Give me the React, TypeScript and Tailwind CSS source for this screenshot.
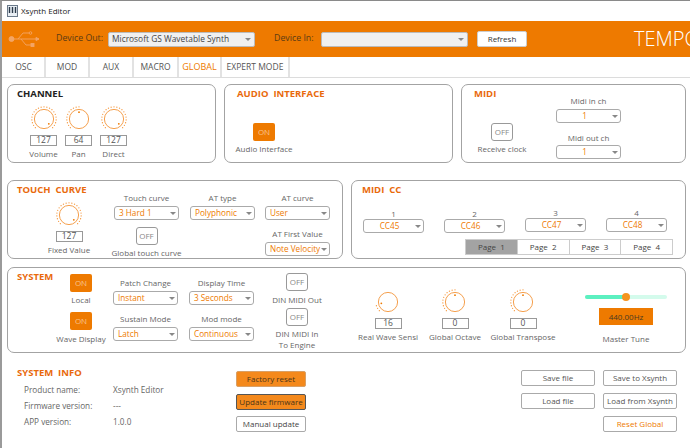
import React from "react";

const font = { fontFamily: '"Open Sans", "Noto Sans", sans-serif' };

const Knob = ({ pct }: { pct: number }) => {
  const c = 13;
  const start = 135;
  const sweep = 270;
  const angle = start + pct * sweep;
  const rad = (a: number) => (a * Math.PI) / 180;
  const dots = [];
  for (let i = 0; i <= 20; i++) {
    const a = start + (i / 20) * sweep;
    if (a > angle + 0.5) break;
    dots.push(
      <circle key={i} cx={c + 12.2 * Math.cos(rad(a))} cy={c + 12.2 * Math.sin(rad(a))} r="0.65" fill="#f5963a" />
    );
  }
  return (
    <svg width="26" height="26" viewBox="0 0 26 26" className="block shrink-0">
      {dots}
      <circle cx={c} cy={c} r="9.6" fill="none" stroke="#f5a04e" strokeWidth="1" />
      <circle cx={c + 6.8 * Math.cos(rad(angle))} cy={c + 6.8 * Math.sin(rad(angle))} r="0.9" fill="#ee7a00" />
    </svg>
  );
};

const ValueBox = ({ children }: { children: React.ReactNode }) => (
  <div className="w-[27px] h-[11px] border border-[#999] flex items-center justify-center text-[8.5px] leading-none text-[#555]">
    {children}
  </div>
);

const Label = ({ children, className = "" }: { children: React.ReactNode; className?: string }) => (
  <div className={"text-[8px] leading-[11px] text-[#666] whitespace-nowrap text-center " + className}>{children}</div>
);

const KnobCell = ({ value, pct, label, w }: { value: number; pct: number; label: string; w: string }) => (
  <div className={"flex flex-col items-center " + w}>
    <Knob pct={pct} />
    <div className="mt-[3px]">
      <ValueBox>{value}</ValueBox>
    </div>
    <Label className="mt-[2px]">{label}</Label>
  </div>
);

const Select = ({ value, center, w = "w-[65px]" }: { value: string; center?: boolean; w?: string }) => (
  <div className={"relative h-[14px] rounded-[3px] border border-[#aaa] bg-white text-[8.2px] leading-none text-[#ee7a00] flex items-center shrink-0 " + w + (center ? " justify-center pr-[8px]" : " pl-[4px]")}>
    <span className="whitespace-nowrap">{value}</span>
    <span className="absolute right-[2px] top-[5px] w-0 h-0 border-l-[3px] border-r-[3px] border-t-[3px] border-l-transparent border-r-transparent border-t-[#888]" />
  </div>
);

const Toggle = ({ on }: { on?: boolean }) =>
  on ? (
    <div className="w-[22px] h-[18px] rounded-[2px] bg-[#ee7a00] text-[#f9c48c] text-[8px] flex items-center justify-center">ON</div>
  ) : (
    <div className="w-[22px] h-[18px] rounded-[3px] border border-[#999] bg-white text-[#888] text-[8px] flex items-center justify-center">OFF</div>
  );

const Title = ({ children, black }: { children: React.ReactNode; black?: boolean }) => (
  <div className={"text-[9.5px] font-bold leading-[12px] whitespace-pre " + (black ? "text-[#222]" : "text-[#e96a0c]")}>{children}</div>
);

const Panel = ({ className, children }: { className: string; children: React.ReactNode }) => (
  <div className={"border border-[#a3a3a3] rounded-[7px] bg-white " + className}>{children}</div>
);

const Btn = ({ children, className = "", w }: { children: React.ReactNode; className?: string; w: string }) => (
  <div className={"h-[16px] rounded-[2px] border flex items-center justify-center text-[8px] whitespace-nowrap " + w + " " + className}>
    {children}
  </div>
);

const UsbIcon = () => (
  <svg width="33" height="16" viewBox="0 0 33 16" fill="none" stroke="#f3a566" strokeWidth="0.9" className="shrink-0">
    <circle cx="3.5" cy="8" r="2.5" fill="#f3a566" />
    <path d="M5 8H31" />
    <path d="M31 8l-3-1.6v3.2z" fill="#f3a566" />
    <path d="M10 8l5-6h6" />
    <circle cx="22.5" cy="2" r="1.3" />
    <path d="M13 8l5 6h5" />
    <rect x="23" y="12.5" width="3" height="3" fill="#f3a566" />
  </svg>
);

const AppIcon = () => (
  <svg width="11" height="12" viewBox="0 0 11 12" className="shrink-0">
    <rect x="0.5" y="0.5" width="10" height="11" fill="#e8eef4" stroke="#6b7a8a" />
    <path d="M2.5 2v6M5.5 2v6M8.5 2v6" stroke="#2b3a4a" strokeWidth="1.4" />
  </svg>
);

const tabs = [
  { name: "OSC", w: "w-[43px]" },
  { name: "MOD", w: "w-[44px]" },
  { name: "AUX", w: "w-[44px]" },
  { name: "MACRO", w: "w-[45px]" },
  { name: "GLOBAL", w: "w-[43px]", active: true },
  { name: "EXPERT MODE", w: "w-[68px]" },
];

const LabeledSelect = ({ label, value, w }: { label: string; value: string; w?: string }) => (
  <div className="flex flex-col items-center">
    <Label className="h-[14px]">{label}</Label>
    <Select value={value} w={w} />
  </div>
);

export default function App() {
  return (
    <div className="w-[690px] h-[448px] overflow-hidden bg-white border-t border-l-2 border-t-[#8a8a8a] border-l-[#9a9a9a] flex flex-col" style={font}>
      {/* title bar */}
      <div className="h-[20px] flex items-center gap-[3px] pl-[5px] text-[8px] text-[#222]">
        <AppIcon />
        <span>Xsynth Editor</span>
      </div>

      {/* device bar */}
      <div className="h-[36px] bg-[#ee7a00] flex items-center pl-[6px] overflow-hidden text-[8.8px] text-[#5b3a14]">
        <UsbIcon />
        <span className="ml-[15px] w-[49px] shrink-0 whitespace-nowrap">Device Out:</span>
        <div className="ml-[3px] w-[147px] h-[15px] shrink-0 bg-[#f0f0f0] border border-[#bbb] rounded-[2px] relative flex items-center pl-[3px] text-[8.4px] text-[#444] whitespace-nowrap">
          Microsoft GS Wavetable Synth
          <span className="absolute right-[3px] top-[5px] w-0 h-0 border-l-[3px] border-r-[3px] border-t-[3px] border-l-transparent border-r-transparent border-t-[#888]" />
        </div>
        <span className="ml-[19px] w-[42px] shrink-0 whitespace-nowrap">Device In:</span>
        <div className="ml-[5px] w-[147px] h-[15px] shrink-0 bg-[#f0f0f0] border border-[#bbb] rounded-[2px] relative">
          <span className="absolute right-[3px] top-[5px] w-0 h-0 border-l-[3px] border-r-[3px] border-t-[3px] border-l-transparent border-r-transparent border-t-[#888]" />
        </div>
        <div className="ml-[9px] w-[50px] h-[16px] shrink-0 bg-white border border-[#ccc] rounded-[2px] flex items-center justify-center text-[8px] text-[#333]">Refresh</div>
        <span className="ml-[107px] shrink-0 text-[20px] font-light text-white leading-none whitespace-nowrap">TEMPO</span>
      </div>

      {/* tabs */}
      <div className="h-[21px] flex pl-[1px] border-b border-[#dcdcdc] text-[8.5px] text-[#555] shrink-0">
        {tabs.map((t) => (
          <div
            key={t.name}
            className={"flex items-center justify-center border-r-2 border-[#e2e2e2] whitespace-nowrap " + t.w + (t.active ? " text-[#ee7a00] text-[9px]" : "")}
          >
            {t.name}
          </div>
        ))}
      </div>

      <div className="pl-[5px] flex flex-col">
        {/* row 1 */}
        <div className="flex gap-[8px] mt-[6px]">
          <Panel className="w-[209px] h-[79px] pl-[9px] pt-[3px]">
            <Title black>CHANNEL</Title>
            <div className="flex ml-[9px] mt-[6px]">
              <KnobCell value={127} pct={1} label="Volume" w="w-[35px]" />
              <KnobCell value={64} pct={0.5} label="Pan" w="w-[35px]" />
              <KnobCell value={127} pct={1} label="Direct" w="w-[35px]" />
            </div>
          </Panel>
          <Panel className="w-[229px] h-[79px] pl-[12px] pt-[3px]">
            <Title>{"AUDIO  INTERFACE"}</Title>
            <div className="w-[54px] flex flex-col items-center mt-[23px]">
              <Toggle on />
              <Label className="mt-[2px]">Audio Interface</Label>
            </div>
          </Panel>
          <Panel className="w-[225px] h-[79px] pl-[12px] pt-[3px] flex">
            <div className="w-[56px]">
              <Title>MIDI</Title>
              <div className="flex flex-col items-center mt-[23px]">
                <Toggle />
                <Label className="mt-[2px]">Receive clock</Label>
              </div>
            </div>
            <div className="ml-[26px] flex flex-col items-center pt-[7px]">
              <Label className="h-[14px]">Midi in ch</Label>
              <Select value="1" center />
              <Label className="h-[14px] mt-[8px] leading-[14px]">Midi out ch</Label>
              <Select value="1" center />
            </div>
          </Panel>
        </div>

        {/* row 2 */}
        <div className="flex gap-[8px] mt-[17px]">
          <Panel className="w-[336px] h-[79px] pl-[9px] pt-[3px] flex">
            <div className="w-[96px] shrink-0">
              <Title>{"TOUCH  CURVE"}</Title>
              <div className="w-[104px] flex flex-col items-center mt-[6px]">
                <KnobCell value={127} pct={1} label="Fixed Value" w="w-[60px]" />
              </div>
            </div>
            <div className="flex flex-col items-center pt-[8px] w-[65px] ml-[1px]">
              <LabeledSelect label="Touch curve" value="3 Hard 1" />
              <div className="mt-[7px]">
                <Toggle />
              </div>
              <Label className="mt-[2px]">Global touch curve</Label>
            </div>
            <div className="pt-[8px] ml-[11px]">
              <LabeledSelect label="AT  type" value="Polyphonic" />
            </div>
            <div className="pt-[8px] ml-[10px] flex flex-col items-center">
              <LabeledSelect label="AT curve" value="User" />
              <div className="mt-[8px]">
                <LabeledSelect label="AT First Value" value="Note Velocity" />
              </div>
            </div>
          </Panel>
          <Panel className="w-[335px] h-[79px] pl-[10px] pt-[3px]">
            <Title>{"MIDI  CC"}</Title>
            <div className="flex gap-[20px] ml-[1px] mt-[12px] items-end">
              {["CC45", "CC46", "CC47", "CC48"].map((cc, i) => (
                <div key={cc} className={"flex flex-col items-center " + (i > 1 ? "-translate-y-px" : "")}>
                  <Label className="h-[11px]">{i + 1}</Label>
                  <Select value={cc} center w="w-[61px]" />
                </div>
              ))}
            </div>
            <div className="flex ml-[103px] mt-[6px] h-[16px] w-[208px] border border-[#ccc] text-[8px] text-[#444] whitespace-pre">
              <div className="flex-1 bg-[#a3a3a3] flex items-center justify-center">{"Page  1"}</div>
              <div className="flex-1 border-l border-[#ccc] flex items-center justify-center">{"Page  2"}</div>
              <div className="flex-1 border-l border-[#ccc] flex items-center justify-center">{"Page  3"}</div>
              <div className="flex-1 border-l border-[#ccc] flex items-center justify-center">{"Page  4"}</div>
            </div>
          </Panel>
        </div>

        {/* system */}
        <Panel className="w-[679px] h-[86px] mt-[8px] pl-[9px] pt-[3px] flex">
          <div className="w-[37px] shrink-0">
            <Title>SYSTEM</Title>
          </div>
          <div className="w-[54px] flex flex-col items-center shrink-0 pt-[3px]">
            <Toggle on />
            <Label className="mt-[2px]">Local</Label>
            <div className="mt-[7px]">
              <Toggle on />
            </div>
            <Label className="mt-[3px]">Wave Display</Label>
          </div>
          <div className="ml-[5px] pt-[6px]">
            <LabeledSelect label="Patch Change" value="Instant" />
            <div className="mt-[8px]">
              <LabeledSelect label="Sustain Mode" value="Latch" />
            </div>
          </div>
          <div className="ml-[11px] pt-[6px]">
            <LabeledSelect label="Display Time" value="3 Seconds" />
            <div className="mt-[8px]">
              <LabeledSelect label="Mod mode" value="Continuous" />
            </div>
          </div>
          <div className="ml-[13px] w-[60px] flex flex-col items-center shrink-0 pt-[2px]">
            <Toggle />
            <Label className="mt-[3px]">DIN MIDI Out</Label>
            <div className="mt-[3px]">
              <Toggle />
            </div>
            <Label className="mt-[2px]">DIN MIDI In</Label>
            <Label>To Engine</Label>
          </div>
          <div className="flex pt-[18px] ml-[26px]">
            <KnobCell value={16} pct={0.126} label="Real Wave Sensi" w="w-[70px]" />
            <KnobCell value={0} pct={0.5} label="Global Octave" w="w-[64px]" />
            <KnobCell value={0} pct={0.5} label="Global Transpose" w="w-[72px]" />
          </div>
          <div className="ml-[26px] w-[82px] flex flex-col items-center pt-[24px]">
            <div className="relative w-[82px] h-[4px] rounded-full bg-[#d4fbec]">
              <div className="w-[41px] h-[4px] rounded-full bg-[#5cf0c0]" />
              <div className="absolute left-[37px] -top-[2px] w-[8px] h-[8px] rounded-full bg-[#f5941e]" />
            </div>
            <div className="mt-[9px] w-[54px] h-[17px] bg-[#ee7a00] flex items-center justify-center text-[8px] text-[#4a3a20]">440.00Hz</div>
            <Label className="mt-[8px]">Master Tune</Label>
          </div>
        </Panel>

        {/* bottom */}
        <div className="flex mt-[14px] pl-[10px]">
          <div className="w-[219px] shrink-0">
            <Title>{"SYSTEM  INFO"}</Title>
            <div className="mt-[3px] pl-[7px] grid grid-cols-[89px_1fr] auto-rows-[16px] items-center text-[8.2px] text-[#666]">
              <span>Product name:</span>
              <span>Xsynth Editor</span>
              <span>Firmware version:</span>
              <span>---</span>
              <span>APP version:</span>
              <span>1.0.0</span>
            </div>
          </div>
          <div className="w-[70px] flex flex-col gap-[6px] shrink-0 mt-[4px] items-stretch">
            <Btn w="w-[70px]" className="bg-[#f4891c] border-[#d9a066] text-[#4a3418]">Factory reset</Btn>
            <Btn w="w-[70px]" className="bg-[#f4891c] border-[#555] text-[#4a3418] mt-px">Update firmware</Btn>
            <Btn w="w-[70px]" className="bg-white border-[#aaa] text-[#444]">Manual update</Btn>
          </div>
          <div className="ml-[215px] flex flex-col mt-[3px]">
            <div className="flex gap-[8px]">
              <Btn w="w-[74px]" className="border-[#aaa] text-[#555]">Save file</Btn>
              <Btn w="w-[74px]" className="border-[#aaa] text-[#555]">Save to Xsynth</Btn>
            </div>
            <div className="flex gap-[8px] mt-[7px]">
              <Btn w="w-[74px]" className="border-[#aaa] text-[#555]">Load file</Btn>
              <Btn w="w-[74px]" className="border-[#aaa] text-[#555]">Load from Xsynth</Btn>
            </div>
            <div className="flex justify-end mt-[7px]">
              <Btn w="w-[74px]" className="border-[#aaa] text-[#ee7a00]">Reset Global</Btn>
            </div>
          </div>
        </div>
      </div>
    </div>
  );
}
